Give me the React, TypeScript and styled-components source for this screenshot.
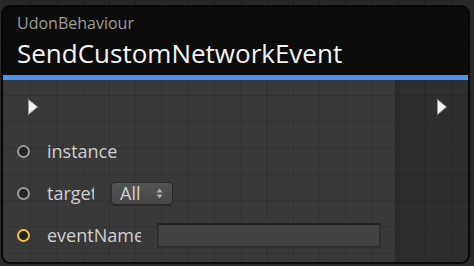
import React from 'react';
import styled, { createGlobalStyle, css } from 'styled-components';

const GRID = 26.3;

const gridLines = (line: string) => css`
	background-image: linear-gradient(to right, ${line} 1px, transparent 1px),
		linear-gradient(to bottom, ${line} 1px, transparent 1px);
	background-size: ${GRID}px ${GRID}px;
	background-position: 3.7px 16.1px;
	background-attachment: fixed;
`;

const GlobalStyle = createGlobalStyle`
	html, body {
		margin: 0;
		padding: 0;
		width: 474px;
		height: 266px;
		overflow: hidden;
	}
	body {
		background-color: #292929;
		${gridLines('#1f1f1f')}
		font-family: 'Open Sans', 'Noto Sans', sans-serif;
	}
`;

const Node = styled.div`
	margin: 5px 0 0 1px;
	width: 469px;
	height: 259px;
	box-sizing: border-box;
	border: 2px solid #080808;
	border-radius: 9px;
	overflow: hidden;
	display: flex;
	flex-direction: column;
	background: #0c0c0c;
`;

const Header = styled.div`
	background: #0c0c0c;
	padding: 7px 14px 6px 14px;
	border-bottom: 5px solid #4b93ee;
`;

const Owner = styled.div`
	font-size: 16px;
	line-height: 19px;
	color: #9c9c9c;
`;

const Title = styled.div`
	margin-top: 5px;
	font-size: 26px;
	line-height: 31px;
	color: #f4f4f4;
`;

const Body = styled.div`
	flex: 1;
	display: flex;
	min-height: 0;
`;

const Inputs = styled.div`
	flex: 1;
	background-color: #393939;
	${gridLines('rgba(0, 0, 0, 0.13)')}
	padding-top: 6px;
	display: flex;
	flex-direction: column;
`;

const Outputs = styled.div`
	width: 72px;
	background-color: #2e2e2e;
	${gridLines('rgba(0, 0, 0, 0.13)')}
	border-left: 1px solid #292929;
	padding-top: 6px;
	display: flex;
	flex-direction: column;
	align-items: flex-end;
`;

const FlowRow = styled.div<{ $side: 'in' | 'out' }>`
	height: 42px;
	margin-bottom: 2px;
	display: flex;
	align-items: center;
	padding: ${(p) => (p.$side === 'in' ? '0 0 0 24px' : '0 20px 0 0')};
`;

const PortRow = styled.div`
	height: 42px;
	display: flex;
	align-items: center;
	padding-left: 14px;
`;

const Port = styled.span<{ $color: string }>`
	width: 9px;
	height: 9px;
	border-radius: 50%;
	border: 2px solid ${(p) => p.$color};
	background: #232323;
	flex: none;
`;

const Label = styled.span<{ $width?: number }>`
	margin-left: 17px;
	font-size: 18px;
	color: #cfcfcf;
	white-space: nowrap;
	overflow: hidden;
	flex: none;
	${(p) => p.$width !== undefined && `width: ${p.$width}px;`}
`;

const Dropdown = styled.div`
	margin-left: 17px;
	width: 62px;
	height: 23px;
	box-sizing: border-box;
	border: 1px solid #2a2a2a;
	border-radius: 4px;
	background: linear-gradient(#535353, #474747);
	box-shadow: 0 1px 0 #262626;
	display: flex;
	align-items: center;
	justify-content: space-between;
	padding: 0 9px 0 8px;
	font-size: 18px;
	color: #d2d2d2;
`;

const TextField = styled.div`
	margin-left: 16px;
	width: 224px;
	height: 25px;
	box-sizing: border-box;
	background: #434343;
	border: 2px solid #2f2f2f;
	border-top-color: #232323;
`;

const FlowArrow = () => (
	<svg width="12" height="18" viewBox="0 0 12 18">
		<polygon points="1.5,1.5 10.5,9 1.5,16.5" fill="#f4f4f4" stroke="#9a9a9a" strokeWidth="1" strokeLinejoin="round" />
	</svg>
);

const UpDown = () => (
	<svg width="7" height="11" viewBox="0 0 7 11">
		<polygon points="0.5,4.5 3.5,0.5 6.5,4.5" fill="#b0b0b0" />
		<polygon points="0.5,6.5 3.5,10.5 6.5,6.5" fill="#b0b0b0" />
	</svg>
);

const App = function () {
	return (
		<>
			<GlobalStyle />
			<Node>
				<Header>
					<Owner>UdonBehaviour</Owner>
					<Title>SendCustomNetworkEvent</Title>
				</Header>
				<Body>
					<Inputs>
						<FlowRow $side="in">
							<FlowArrow />
						</FlowRow>
						<PortRow>
							<Port $color="#9a9a9a" />
							<Label>instance</Label>
						</PortRow>
						<PortRow>
							<Port $color="#9a9a9a" />
							<Label $width={47}>target</Label>
							<Dropdown>
								All
								<UpDown />
							</Dropdown>
						</PortRow>
						<PortRow>
							<Port $color="#f2c443" />
							<Label $width={94}>eventName</Label>
							<TextField />
						</PortRow>
					</Inputs>
					<Outputs>
						<FlowRow $side="out">
							<FlowArrow />
						</FlowRow>
					</Outputs>
				</Body>
			</Node>
		</>
	);
};

export default App;
